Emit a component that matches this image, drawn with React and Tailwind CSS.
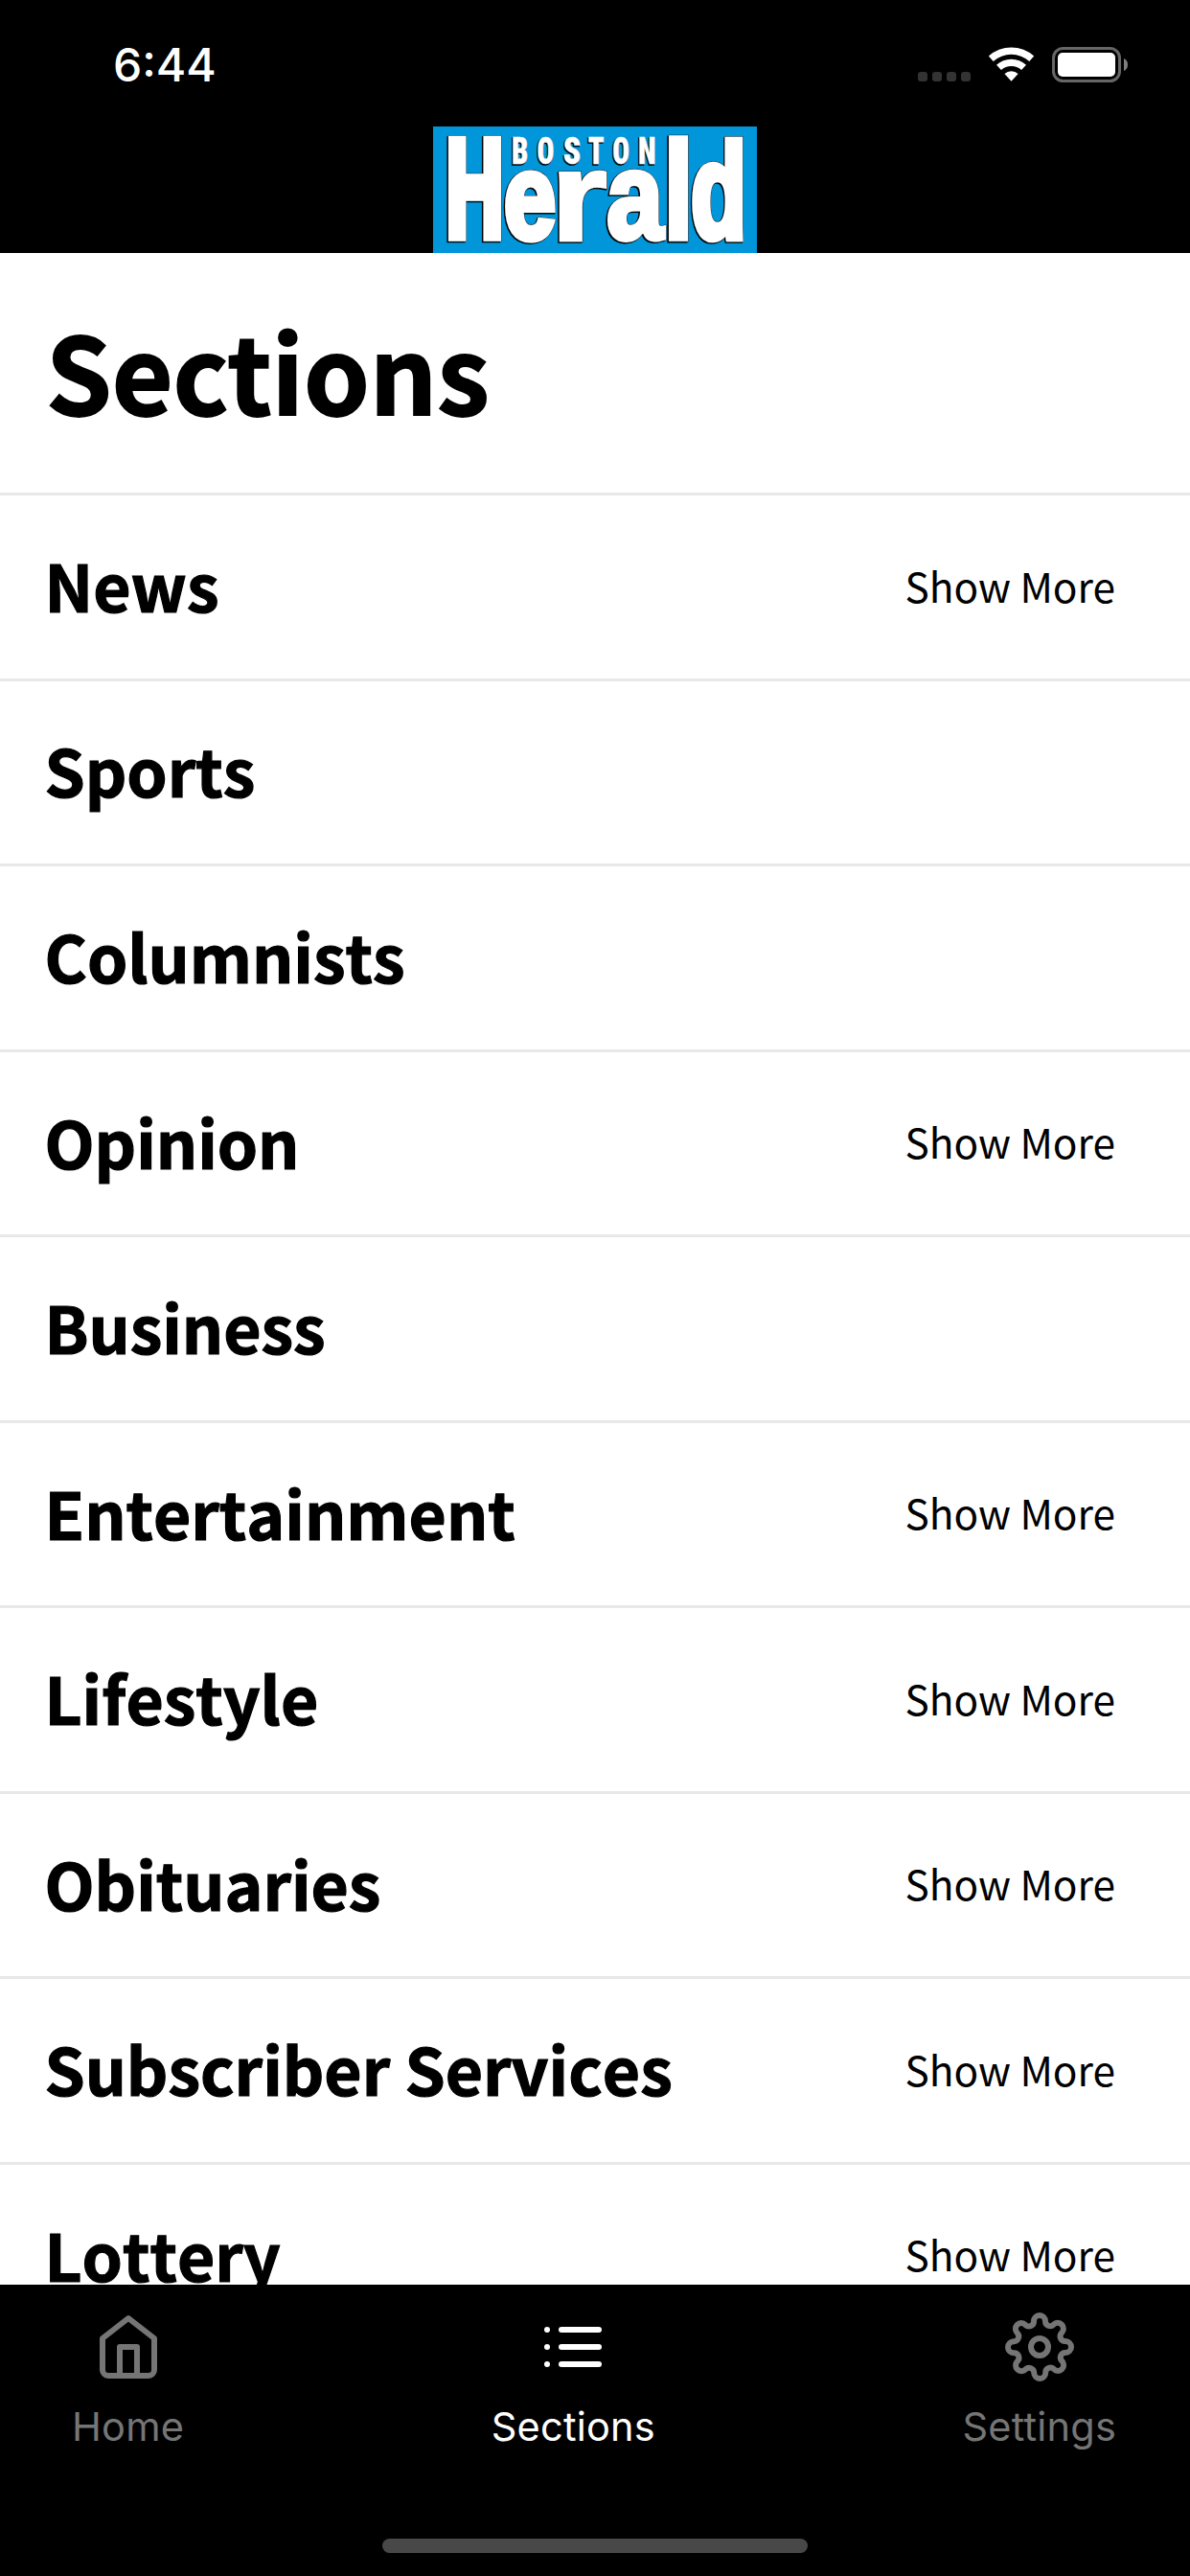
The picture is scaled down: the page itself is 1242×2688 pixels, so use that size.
import React from 'react'
import { FiHome, FiList, FiSettings } from 'react-icons/fi'

const sections = [
  { name: 'News', more: true },
  { name: 'Sports', more: false },
  { name: 'Columnists', more: false },
  { name: 'Opinion', more: true },
  { name: 'Business', more: false },
  { name: 'Entertainment', more: true },
  { name: 'Lifestyle', more: true },
  { name: 'Obituaries', more: true },
  { name: 'Subscriber Services', more: true },
  { name: 'Lottery', more: true },
]

// x0/x1/top/bottom: box of the letter in the logo
// l/r/a/d: ink of the glyph at 100px, w: extra weight
const bigLetters = [
  { ch: 'H', x0: 16, x1: 71, top: 10, bottom: 120, l: 6.7, r: 65.5, a: 68.8, d: 0, w: 8 },
  { ch: 'e', x0: 75.3, x1: 127.3, top: 45.5, bottom: 121.3, l: 4, r: 51.8, a: 53.8, d: 1, w: 5.5 },
  { ch: 'r', x0: 132, x1: 180.7, top: 45.5, bottom: 120, l: 7, r: 37, a: 53.8, d: 0, w: 2 },
  { ch: 'a', x0: 182.7, x1: 242.3, top: 45.5, bottom: 121.3, l: 3.7, r: 55.5, a: 53.8, d: 1, w: 4.5 },
  { ch: 'l', x0: 246, x1: 266, top: 10, bottom: 120, l: 7, r: 20.7, a: 72.5, d: 0, w: 1 },
  { ch: 'd', x0: 270.3, x1: 323.3, top: 10, bottom: 121.3, l: 4, r: 54.2, a: 72.5, d: 1, w: 6 },
]

const smallLetters = [
  { ch: 'B', x0: 83.3, x1: 98.3, top: 10.7, bottom: 39, l: 4.7, r: 53, a: 71.1, d: 0, w: 1 },
  { ch: 'O', x0: 109.3, x1: 125.7, top: 10.3, bottom: 39.4, l: 3, r: 57.5, a: 72.1, d: 1, w: 1 },
  { ch: 'S', x0: 136.3, x1: 153.3, top: 10.3, bottom: 39.4, l: 2.2, r: 52, a: 72.1, d: 1, w: 1 },
  { ch: 'T', x0: 162, x1: 178, top: 10.7, bottom: 39, l: 1.6, r: 53.5, a: 71.1, d: 0, w: 1 },
  { ch: 'O', x0: 188, x1: 204.3, top: 10.3, bottom: 39.4, l: 3, r: 57.5, a: 72.1, d: 1, w: 1 },
  { ch: 'N', x0: 215.3, x1: 231.3, top: 10.7, bottom: 39, l: 4.7, r: 56.3, a: 71.1, d: 0, w: 1 },
]

const glyphMatrix = ({ x0, x1, top, bottom, l, r, a, d, w }) => {
  const sx = (x1 - x0) / (r - l + w)
  const sy = (bottom - top) / (a + d + w)
  return `matrix(${sx} 0 0 ${sy} ${x0 - sx * (l - w / 2)} ${top + sy * (a + w / 2)})`
}

const Letters = ({ glyphs, color, outline = 0 }) =>
  glyphs.map((g, i) => (
    <text key={i} transform={glyphMatrix(g)} fill={color} stroke={color} strokeWidth={g.w + outline}>
      {g.ch}
    </text>
  ))

const Logo = () => (
  <svg className="self-center w-[338px] h-[132px]" viewBox="0 0 338 132" strokeMiterlimit="2" role="img" aria-label="Boston Herald">
    <rect width="338" height="132" fill="#0195da" />
    <g className="font-['Liberation_Sans',sans-serif] font-bold text-[100px]">
      <g transform="translate(-1.2 1.2)">
        <Letters glyphs={bigLetters} color="#000" outline={0.8} />
      </g>
      <Letters glyphs={bigLetters} color="#222" outline={0.8} />
      <Letters glyphs={bigLetters} color="#fff" />
    </g>
    <g className="font-['Roboto',sans-serif] font-black [font-stretch:75%] text-[100px]">
      <g transform="translate(-0.7 0.7)">
        <Letters glyphs={smallLetters} color="#000" outline={2.5} />
      </g>
      <Letters glyphs={smallLetters} color="#fff" />
    </g>
  </svg>
)

const StatusBar = () => (
  <div className="flex justify-between h-[132px] pl-[118px] pr-[65px]">
    <span className="pt-[38px] text-[48px] leading-[60px] font-medium text-white font-['Inter',sans-serif]">6:44</span>
    <div className="flex items-end h-[86px]">
      <div className="flex gap-[5px] pb-px">
        {[0, 1, 2, 3].map((i) => (
          <span key={i} className="size-[10px] rounded-[3px] bg-[#333]" />
        ))}
      </div>
      <svg className="ml-[18px] w-[49px] h-[38px] text-white" viewBox="0 0 49 38" fill="currentColor">
        <g transform="translate(24.5 36.7)">
          <path d="M-23.7-26.1A35.2 35.2 0 0 1 23.7-26.1L18.8-20.7A28 28 0 0 0-18.8-20.7Z" />
          <path d="M-15.5-17A23 23 0 0 1 15.5-17L10.6-11.7A15.8 15.8 0 0 0-10.6-11.7Z" />
          <path d="M-7.1-7.8A10.6 10.6 0 0 1 7.1-7.8L0 0Z" />
        </g>
      </svg>
      <svg className="ml-[18px] w-[79px] h-[38px]" viewBox="0 0 79 38">
        <rect x="1.5" y="2.5" width="69" height="34" rx="10" fill="none" stroke="#666" strokeWidth="3" />
        <rect x="6" y="7" width="60" height="25" rx="5" fill="#fff" />
        <path d="M75 13C77.5 14 79 16.5 79 19.5S77.5 25 75 26Z" fill="#808080" />
      </svg>
    </div>
  </div>
)

const SectionRow = ({ name, more }) => (
  <li className="flex items-center justify-between h-[193.56px] pl-[46.5px] pr-[78px] pb-[5px] border-t-3 border-[#e8e8e8]">
    <span className="text-[67.7px] leading-none font-bold [font-kerning:none] [-webkit-text-stroke:1.2px_#000]">{name}</span>
    {more && <button className="pt-[2px] text-[42.4px] leading-none">Show More</button>}
  </li>
)

const Tab = ({ icon: Icon, label, active }) => (
  <button className={`flex flex-col items-center gap-[22px] ${active ? 'text-white' : 'text-[#757575]'}`}>
    <Icon className="size-[72px]" />
    <span className="text-[41.5px] leading-[50px] tracking-[0.2px] font-['Inter',sans-serif]">{label}</span>
  </button>
)

const App = () => {
  return (
    <div className="flex flex-col w-[1242px] h-[2688px] overflow-hidden bg-white text-black font-['Noto_Sans_CJK_SC',sans-serif]">
      <header className="flex flex-col h-[264px] shrink-0 bg-black">
        <StatusBar />
        <Logo />
      </header>

      <main className="flex-1 min-h-0 overflow-hidden">
        <div className="flex items-center h-[250px] pl-12 pb-2">
          <h1 className="text-[110px] leading-none font-bold [-webkit-text-stroke:1.8px_#000]">Sections</h1>
        </div>
        <ul>
          {sections.map((section) => (
            <SectionRow key={section.name} {...section} />
          ))}
        </ul>
      </main>

      {/* Tab bar */}
      <nav className="flex flex-col justify-between h-[304px] shrink-0 pt-[29px] pb-6 bg-black">
        <div className="flex justify-between pl-[75px] pr-[77px]">
          <Tab icon={FiHome} label="Home" />
          <Tab icon={FiList} label="Sections" active />
          <Tab icon={FiSettings} label="Settings" />
        </div>
        <div className="self-center w-[444px] h-[15px] rounded-full bg-[#484848]" />
      </nav>
    </div>
  )
}

export default App
